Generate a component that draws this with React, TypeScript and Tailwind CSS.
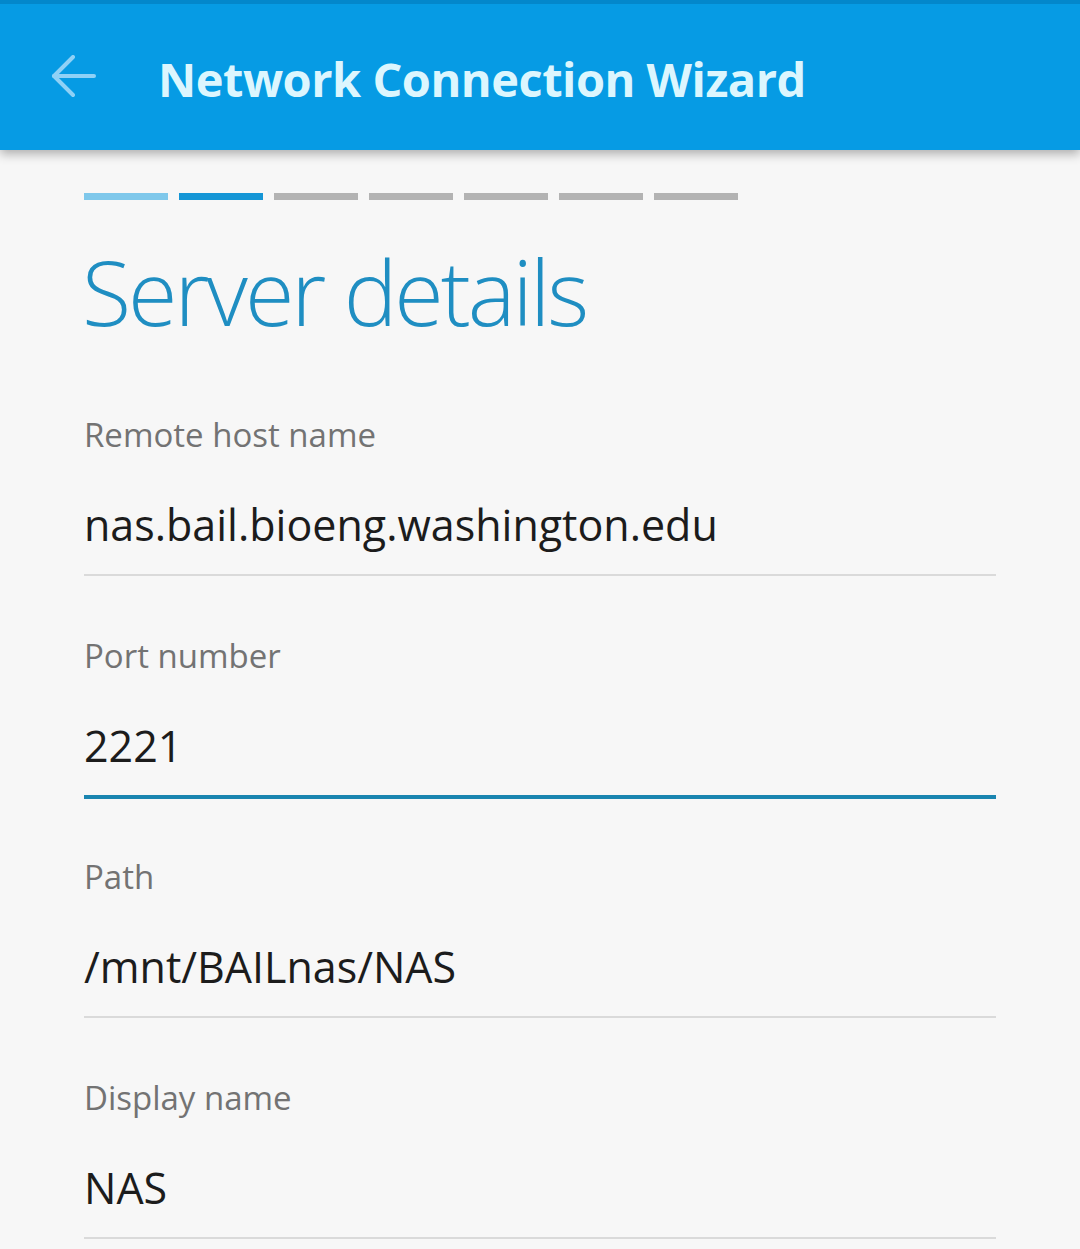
import React from "react";

const fields = [
  { label: "Remote host name", value: "nas.bail.bioeng.washington.edu", active: false },
  { label: "Port number", value: "2221", active: true },
  { label: "Path", value: "/mnt/BAILnas/NAS", active: false },
  { label: "Display name", value: "NAS", active: false },
];

const steps = ["bg-[#7fc8eb]", "bg-[#1596d6]", "bg-[#b3b3b3]", "bg-[#b3b3b3]", "bg-[#b3b3b3]", "bg-[#b3b3b3]", "bg-[#b3b3b3]"];

export default function App() {
  return (
    <div className="w-[1080px] h-[1249px] overflow-hidden bg-[#f7f7f7] font-['Open_Sans',sans-serif]">
      <header className="relative z-10 h-[150px] bg-[#069be4] shadow-[0_4px_10px_rgba(0,0,0,0.3)] flex flex-col">
        <div className="h-[4px] bg-[#0387cb]" />
        <div className="flex-1 flex items-center">
          <div className="w-[158px] flex items-center pl-[51px]">
            <svg width="46" height="44" viewBox="0 0 46 44" fill="none" stroke="#8fd1f6" strokeWidth="4" strokeLinecap="round" strokeLinejoin="round">
              <path d="M43 21H3" />
              <path d="M22 2L3 21L22 40" />
            </svg>
          </div>
          <h1 className="text-[47px] font-bold text-[#dcf6fe] leading-none tracking-[-0.5px] pt-[4px]">Network Connection Wizard</h1>
        </div>
      </header>
      <main className="px-[84px]">
        <div className="flex gap-[11px] pt-[43px]">
          {steps.map((c, i) => (
            <div key={i} className={`w-[84px] h-[7px] ${c}`} />
          ))}
        </div>
        <h2 className="mt-[36px] text-[90px] font-light leading-[110px] text-[#1f8ec2] tracking-[-3px] -ml-[2px]">Server details</h2>
        <div className="pt-[69px]">
          {fields.map((f) => (
            <div key={f.label} className="h-[221px]">
              <div className="h-[40px] leading-[40px] text-[33px] text-[#737373]">{f.label}</div>
              <div className="mt-[45px] h-[50px] leading-[50px] text-[43px] text-[#1c1c1c]">{f.value}</div>
              <div className={`mt-[24px] ${f.active ? "h-[4px] bg-[#1a85b0]" : "h-[2px] bg-[#dadada]"}`} />
            </div>
          ))}
        </div>
      </main>
    </div>
  );
}
